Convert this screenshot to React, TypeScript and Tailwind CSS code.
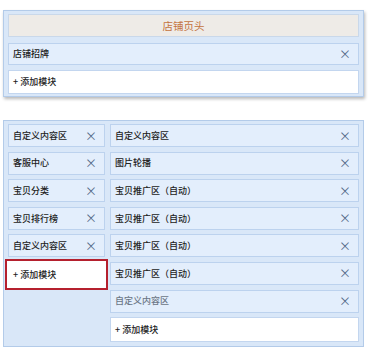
import React from 'react';

const font = { fontFamily: '"Noto Sans CJK SC", "Noto Sans", sans-serif' };

const Close: React.FC = () => (
  <span className="text-[12px] leading-none text-[#55698a]">×</span>
);

const ModuleRow: React.FC<{ label: string; faded?: boolean }> = ({ label, faded }) => (
  <div className="flex h-[23px] items-center justify-between border border-[#bcd2ee] bg-[#e3eefc] pl-[4px] pr-[7px]">
    <span className={`text-[9px] font-medium ${faded ? 'text-[#6b7686]' : 'text-[#222]'}`}>{label}</span>
    <Close />
  </div>
);

const AddRow: React.FC<{ className?: string }> = ({ className = '' }) => (
  <div className={`flex items-center bg-white pl-[4px] text-[9px] font-medium text-[#222] ${className}`}>
    + 添加模块
  </div>
);

export default function App() {
  const left = ['自定义内容区', '客服中心', '宝贝分类', '宝贝排行榜', '自定义内容区'];
  const right = ['自定义内容区', '图片轮播', '宝贝推广区（自动）', '宝贝推广区（自动）', '宝贝推广区（自动）', '宝贝推广区（自动）'];

  return (
    <div className="h-[351px] w-[370px] bg-white" style={font}>
      <div className="pt-[10px] pl-[3px]">
        {/* top: page header */}
        <div className="flex w-[361px] flex-col border border-[#b3cbe9] bg-[#d9e7f8] px-[4px] pt-[3px] pb-[2px] shadow-[1px_2px_3px_rgba(0,0,0,0.28)]">
          <div className="flex h-[23px] items-center justify-center border border-[#c9d8ea] bg-[#eeebe7] text-[10.5px] text-[#c4733e]">
            店铺页头
          </div>
          <div className="mt-[6px] flex h-[22px] items-center justify-between border border-[#bcd2ee] bg-[#e3eefc] pl-[4px] pr-[7px]">
            <span className="text-[9px] font-medium text-[#222]">店铺招牌</span>
            <Close />
          </div>
          <AddRow className="mt-[5px] h-[24px] border border-[#c3d6ef]" />
        </div>

        {/* bottom: body columns */}
        <div className="mt-[23px] flex h-[227px] w-[361px] gap-[5px] border border-[#b3cbe9] bg-[#d9e7f8] px-[4px] pt-[3px]">
          <div className="flex w-[97px] flex-col gap-[4.6px]">
            {left.map((l, i) => (
              <ModuleRow key={i} label={l} />
            ))}
            <AddRow className="-mx-[3px] -mt-[3px] h-[31px] border-2 border-[#b5202e] pl-[6px]" />
          </div>
          <div className="flex flex-1 flex-col gap-[4.6px]">
            {right.map((r, i) => (
              <ModuleRow key={i} label={r} />
            ))}
            <ModuleRow label="自定义内容区" faded />
            <AddRow className="h-[25px] border border-[#c3d6ef]" />
          </div>
        </div>
      </div>
    </div>
  );
}
